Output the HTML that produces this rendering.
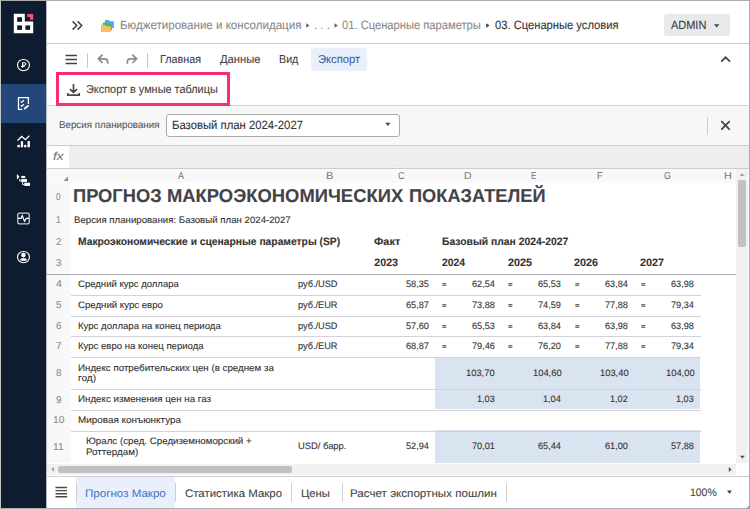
<!DOCTYPE html>
<html lang="ru">
<head>
<meta charset="utf-8">
<title>Сценарные условия</title>
<style>
html,body{margin:0;padding:0}
html{background:#fff}
body{width:750px;height:509px;position:relative;overflow:hidden;background:#9a9a9a;font-family:"Liberation Sans",sans-serif}
#frame{position:absolute;left:0;top:0;width:750px;height:509px;box-sizing:border-box;background:#fff;border:1px solid #ababab;border-left-color:#c4c4c4;border-bottom-color:#aaaaaa;border-radius:0 0 5px 0;overflow:hidden}
#app{position:absolute;left:-1px;top:-1px;width:750px;height:509px}
.a{position:absolute}
.t{position:absolute;white-space:pre;text-rendering:geometricPrecision;-webkit-text-stroke:0.1px;line-height:20px;height:20px;transform-origin:0 50%}
#side{left:1px;top:1px;width:45px;height:507px;background:#0e1c2f}
#side .act{left:0;top:83px;width:45px;height:39px;background:#24477b}
.hl{position:absolute;height:1px;background:#cbcbd3}
.vl{position:absolute;width:1px;background:#cfcfcf}
.cell{position:absolute;background:#dae3f0}
.gl{position:absolute;height:1px;background:#d2d2d8}
</style>
</head>
<body>
<div id="frame"><div id="app">

<!-- sidebar -->
<div id="side" class="a">
  <div class="act a"></div>
</div>
<div class="a" style="left:46px;top:1px;width:1px;height:507px;background:#b9b9c0"></div>
<svg class="a" style="left:0;top:0" width="47" height="509" viewBox="0 0 47 509" fill="none">
<!-- logo -->
<path d="M13.8 13.8H24.8V21.6H33.2V33.2H13.8Z" fill="#fff"/>
<rect x="17.2" y="17.2" width="4.8" height="4.6" fill="#0e1c2f"/>
<rect x="17.2" y="25.4" width="4.8" height="4.5" fill="#0e1c2f"/>
<rect x="25.4" y="25.4" width="4.7" height="4.5" fill="#0e1c2f"/>
<path d="M27.2 14H33.2V19.8H30.1V17.1H27.2Z" fill="#ff4a7d"/>
<!-- ruble -->
<ellipse cx="23.5" cy="65.1" rx="6" ry="5.6" stroke="#fff" stroke-width="1.15"/>
<path d="M22.55 67.8V62.7H24.6a1.3 1.3 0 0 1 0 2.6H22.55" stroke="#fff" stroke-width="1.05"/>
<rect x="20.9" y="66.1" width="3.8" height="0.95" fill="#fff"/>
<!-- doc (active) -->
<path d="M22.3 109.3H18.5V97.6H28.4V104" stroke="#fff" stroke-width="1.3"/>
<path d="M24.2 109L28.6 105.3" stroke="#fff" stroke-width="1.7"/>
<path d="M20.8 101.6L21.7 102.3L23.9 100.3M20.8 105.5L21.7 106.2L23.9 104.2" stroke="#fff" stroke-width="1.2"/>
<!-- chart -->
<rect x="17.4" y="144.9" width="2.4" height="2.4" fill="#fff"/>
<rect x="20.8" y="141.2" width="2.3" height="6.1" fill="#fff"/>
<rect x="24.1" y="144.9" width="2.3" height="2.4" fill="#fff"/>
<rect x="27.5" y="141" width="2.4" height="6.3" fill="#fff"/>
<path d="M17.5 140.4L21.8 136.4L25.4 139.7L29.3 135.7" stroke="#fff" stroke-width="1.3"/>
<!-- tree -->
<path d="M16.9 174.1L19.6 176.8L16.9 179.5Z" fill="#fff"/>
<rect x="21.3" y="175.9" width="3.9" height="2.2" fill="#fff"/>
<rect x="21.2" y="179.1" width="5.8" height="2.8" fill="#fff"/>
<rect x="24.3" y="182.7" width="5.7" height="3.2" fill="#fff"/>
<path d="M19.7 179V181H21.5M22.6 182V184.6H24.5" stroke="#fff" stroke-width="0.9"/>
<!-- monitor -->
<rect x="17.8" y="213.1" width="11.4" height="10.8" rx="1.4" stroke="#c9cdd3" stroke-width="1.3"/>
<path d="M18 218.4H21L22.2 215.6L24.5 221.3L26.3 218.4H29" stroke="#fff" stroke-width="1.2"/>
<!-- user -->
<ellipse cx="23.5" cy="257.1" rx="6" ry="5.6" stroke="#fff" stroke-width="1.15"/>
<circle cx="23.4" cy="255.1" r="2.3" fill="#fff"/>
<path d="M19.9 260.1C20.3 258.8 21.8 258.1 23.5 258.1S26.7 258.8 27.1 260.1C26 260.8 24.8 261 23.5 261S21 260.8 19.9 260.1Z" fill="#fff"/>
</svg>

<!-- header -->
<div class="hl" style="left:47px;top:43px;width:702px"></div>
<div class="a" style="left:664px;top:14px;width:66px;height:22px;border-radius:3px;background:#e8e9eb"></div>
<svg class="a" style="left:60px;top:10px" width="70" height="30" viewBox="60 10 70 30" fill="none">
<path d="M72.6 21.4L76.7 25.5L72.6 29.6M77.6 21.4L81.7 25.5L77.6 29.6" stroke="#444" stroke-width="1.55"/>
<path d="M104.9 19.9H108.8L110 21.2H113.9V27.9H104.9Z" fill="#5aa2f7"/>
<path d="M102.8 23.3A0.8 0.8 0 0 1 103.6 22.5H106.6L107.8 23.9H112V30.3H102.8Z" fill="#34c759"/>
<path d="M101 24.8H105L106.3 26.2H110.8V31.9H101Z" fill="#ffbb66"/>
</svg>
<svg class="a" style="left:300px;top:20px" width="430" height="12" viewBox="300 20 430 12">
<path d="M306.2 23.2L309.6 25.5L306.2 27.8Z" fill="#666"/>
<path d="M334.5 23.2L337.9 25.5L334.5 27.8Z" fill="#666"/>
<path d="M486.2 23.2L489.6 25.5L486.2 27.8Z" fill="#444"/>
<path d="M714 24.2H719.4L716.7 27.4Z" fill="#444"/>
</svg>

<!-- ribbon -->
<div class="a" style="left:311px;top:48px;width:56px;height:23px;border-radius:3px;background:#e9f0fb"></div>
<div class="vl" style="left:87px;top:53px;height:15px;background:#c8c8c8"></div>
<div class="vl" style="left:147px;top:53px;height:15px;background:#c8c8c8"></div>
<svg class="a" style="left:60px;top:50px" width="90" height="50" viewBox="60 50 90 50" fill="none">
<path d="M65.5 55.4H77M65.5 59.4H77M65.5 63.4H77" stroke="#444" stroke-width="1.5"/>
<path d="M102.6 54.7L98.4 58.8L102.6 63M98.6 58.8H104.4Q107.7 58.8 107.7 62V63.8" stroke="#8a8a8a" stroke-width="1.7"/>
<path d="M132.4 54.7L136.6 58.8L132.4 63M136.4 58.8H130.6Q127.3 58.8 127.3 62V63.8" stroke="#8a8a8a" stroke-width="1.7"/>
<path d="M73.5 84.1V92M69.9 89.2L73.5 92.4L77.1 89.2M67.8 93.1V95.2H79.2V93.1" stroke="#4a4a4f" stroke-width="1.7"/>
</svg>
<svg class="a" style="left:715px;top:50px" width="20" height="20" viewBox="715 50 20 20" fill="none">
<path d="M721.2 61.7L725.6 57.3L730 61.7" stroke="#444" stroke-width="1.7"/>
</svg>


<!-- parameters panel -->
<div class="a" style="left:47px;top:106px;width:702px;height:40px;background:#f7f7f7"></div>
<div class="hl" style="left:47px;top:105px;width:702px;background:#d2d2d8"></div>
<div class="hl" style="left:47px;top:145px;width:702px"></div>
<div class="a" style="left:166px;top:114px;width:234px;height:23px;box-sizing:border-box;border:1px solid #ababab;border-radius:3px;background:#fff"></div>
<div class="vl" style="left:707px;top:117px;height:18px;background:#cdcdcd"></div>

<svg class="a" style="left:715px;top:115px" width="20" height="20" viewBox="715 115 20 20" fill="none">
<path d="M721.3 121.2L729.7 129.6M729.7 121.2L721.3 129.6" stroke="#444" stroke-width="1.7"/>
</svg>
<svg class="a" style="left:384px;top:121px" width="8" height="7" viewBox="384 121 8 7"><path d="M385.3 122.8H390.5L387.9 126Z" fill="#444"/></svg>

<div class="a" style="left:56px;top:72px;width:174px;height:34px;box-sizing:border-box;border:3px solid #fa2e6b"></div>
<!-- formula bar -->
<div class="a" style="left:47px;top:146px;width:702px;height:22px;background:#eeeeee"></div>
<div class="a" style="left:47px;top:146px;width:22px;height:22px;background:#fff"></div>
<div class="a" style="left:394px;top:165px;width:1px;height:1px;background:#d6d6dc;box-shadow:3px 0 #d6d6dc,6px 0 #d6d6dc"></div>
<div class="hl" style="left:47px;top:168px;width:702px"></div>

<!-- sheet -->
<div class="a" style="left:47px;top:169px;width:689px;height:14px;background:#f9f9f9"></div>
<div class="a" style="left:47px;top:183px;width:24px;height:280px;background:#f8f8f8"></div>
<div class="cell" style="left:435px;top:358px;width:265px;height:31px"></div>
<div class="cell" style="left:435px;top:390px;width:265px;height:19px"></div>
<div class="cell" style="left:435px;top:430px;width:265px;height:33px"></div>
<div class="gl" style="left:71px;top:295px;width:630px"></div>
<div class="gl" style="left:71px;top:316px;width:630px"></div>
<div class="gl" style="left:71px;top:336px;width:630px"></div>
<div class="gl" style="left:71px;top:357px;width:630px"></div>
<div class="gl" style="left:71px;top:389px;width:630px"></div>
<div class="gl" style="left:71px;top:410px;width:630px"></div>
<div class="gl" style="left:71px;top:431px;width:630px"></div>
<div class="a" style="left:47px;top:274px;width:689px;height:1px;background:#ababb0"></div>
<svg class="a" style="left:63px;top:176px" width="6" height="6" viewBox="0 0 6 6"><path d="M5 0.5V5H0.5Z" fill="#8c8c8c"/></svg>

<!-- scrollbars -->
<div class="a" style="left:736px;top:169px;width:12px;height:294px;background:#f1f1f1"></div>
<div class="a" style="left:738px;top:180px;width:8px;height:67px;border-radius:2px;background:#c1c1c1"></div>
<div class="a" style="left:47px;top:464px;width:689px;height:11px;background:#f1f1f1"></div>
<div class="a" style="left:58px;top:465.5px;width:234px;height:7.2px;border-radius:2px;background:#c1c1c1"></div>
<svg class="a" style="left:47px;top:169px" width="702" height="307" viewBox="47 169 702 307">
<path d="M739.6 176H744.6L742.1 173.2Z" fill="#a0a0a0"/>
<path d="M739.9 455.8H744.9L742.4 458.6Z" fill="#505050"/>
<path d="M54 466.8V471.8L51.2 469.3Z" fill="#a0a0a0"/>
<path d="M728.8 466.9V471.9L731.6 469.4Z" fill="#505050"/>
</svg>

<!-- bottom tabs -->
<div class="hl" style="left:47px;top:476px;width:702px"></div>
<div class="a" style="left:76px;top:477px;width:99px;height:31px;background:#e9f0fb"></div>
<div class="vl" style="left:76px;top:483px;height:19px"></div>
<div class="vl" style="left:175px;top:483px;height:19px"></div>
<div class="vl" style="left:291px;top:483px;height:19px"></div>
<div class="vl" style="left:342px;top:483px;height:19px"></div>
<div class="vl" style="left:506px;top:483px;height:19px"></div>
<svg class="a" style="left:54px;top:484px" width="16" height="16" viewBox="54 484 16 16" fill="none">
<path d="M55.5 487.5H67.1M55.5 490.6H67.1M55.5 493.7H67.1M55.5 496.8H67.1" stroke="#4a4a4a" stroke-width="1.4"/>
</svg>
<svg class="a" style="left:726px;top:489px" width="8" height="7" viewBox="726 489 8 7"><path d="M727.1 490.6H731.9L729.5 493.9Z" fill="#444"/></svg>

<span class="t" style="left:119.74px;top:15.30px;font-size:12px;font-weight:400;font-style:normal;color:#8a8a8a;transform:scaleX(0.9626)">Бюджетирование и консолидация</span>
<span class="t" style="left:314.05px;top:15.30px;font-size:12px;font-weight:400;font-style:normal;color:#8a8a8a;transform:scaleX(0.9533)">. . .</span>
<span class="t" style="left:342.00px;top:15.30px;font-size:12px;font-weight:400;font-style:normal;color:#8a8a8a;transform:scaleX(0.9309)">01. Сценарные параметры</span>
<span class="t" style="left:495.00px;top:15.30px;font-size:12px;font-weight:400;font-style:normal;color:#333;transform:scaleX(0.9318)">03. Сценарные условия</span>
<span class="t" style="left:671.30px;top:15.30px;font-size:12px;font-weight:400;font-style:normal;color:#3c3c3c;transform:scaleX(0.9132)">ADMIN</span>
<span class="t" style="left:159.76px;top:50.30px;font-size:11.5px;font-weight:400;font-style:normal;color:#444;transform:scaleX(0.9357)">Главная</span>
<span class="t" style="left:220.20px;top:50.30px;font-size:11.5px;font-weight:400;font-style:normal;color:#444;transform:scaleX(0.9756)">Данные</span>
<span class="t" style="left:279.47px;top:50.30px;font-size:11.5px;font-weight:400;font-style:normal;color:#444;transform:scaleX(0.9300)">Вид</span>
<span class="t" style="left:317.82px;top:50.30px;font-size:11.5px;font-weight:400;font-style:normal;color:#3c5fa6;transform:scaleX(0.9762)">Экспорт</span>
<span class="t" style="left:86.25px;top:80.30px;font-size:11.5px;font-weight:400;font-style:normal;color:#444;transform:scaleX(0.9478)">Экспорт в умные таблицы</span>
<span class="t" style="left:59.02px;top:116.00px;font-size:10px;font-weight:400;font-style:normal;color:#555;transform:scaleX(0.9765)">Версия планирования</span>
<span class="t" style="left:171.76px;top:114.70px;font-size:12px;font-weight:400;font-style:normal;color:#333;transform:scaleX(0.9420)">Базовый план 2024-2027</span>
<span class="t" style="left:52.90px;top:147.00px;font-size:11.5px;font-weight:400;font-style:italic;color:#777;transform:scaleX(1.1889)">fx</span>
<span class="t" style="left:178.00px;top:166.90px;font-size:10px;font-weight:400;font-style:normal;color:#7a7a7a;transform:scaleX(0.9000)">A</span>
<span class="t" style="left:325.58px;top:166.90px;font-size:10px;font-weight:400;font-style:normal;color:#7a7a7a;transform:scaleX(1.1200)">B</span>
<span class="t" style="left:398.10px;top:166.90px;font-size:10px;font-weight:400;font-style:normal;color:#7a7a7a;transform:scaleX(0.9000)">C</span>
<span class="t" style="left:463.97px;top:166.90px;font-size:10px;font-weight:400;font-style:normal;color:#7a7a7a;transform:scaleX(1.0333)">D</span>
<span class="t" style="left:531.40px;top:166.90px;font-size:10px;font-weight:400;font-style:normal;color:#7a7a7a;transform:scaleX(0.8000)">E</span>
<span class="t" style="left:597.48px;top:166.90px;font-size:10px;font-weight:400;font-style:normal;color:#7a7a7a;transform:scaleX(0.9200)">F</span>
<span class="t" style="left:664.30px;top:166.90px;font-size:10px;font-weight:400;font-style:normal;color:#7a7a7a;transform:scaleX(0.8857)">G</span>
<span class="t" style="left:724.42px;top:166.90px;font-size:10px;font-weight:400;font-style:normal;color:#7a7a7a;transform:scaleX(1.0833)">H</span>
<span class="t" style="left:73.02px;top:186.40px;font-size:18.67px;font-weight:700;font-style:normal;color:#434347;transform:scaleX(0.9809)">ПРОГНОЗ</span>
<span class="t" style="left:167.31px;top:186.40px;font-size:18.67px;font-weight:700;font-style:normal;color:#434347;transform:scaleX(0.9861)">МАКРОЭКОНОМИЧЕСКИХ</span>
<span class="t" style="left:409.22px;top:186.40px;font-size:18.67px;font-weight:700;font-style:normal;color:#434347;transform:scaleX(0.9768)">ПОКАЗАТЕЛЕЙ</span>
<span class="t" style="left:73.70px;top:210.40px;font-size:9.33px;font-weight:400;font-style:normal;color:#333;transform:scaleX(1.0359)">Версия планирования: Базовый план 2024-2027</span>
<span class="t" style="left:78.30px;top:232.00px;font-size:10.67px;font-weight:700;font-style:normal;color:#333;transform:scaleX(0.9657)">Макроэкономические и сценарные параметры (SP)</span>
<span class="t" style="left:374.30px;top:232.00px;font-size:10.67px;font-weight:700;font-style:normal;color:#333;transform:scaleX(1.0280)">Факт</span>
<span class="t" style="left:442.00px;top:232.00px;font-size:10.67px;font-weight:700;font-style:normal;color:#333;transform:scaleX(0.9715)">Базовый план 2024-2027</span>
<span class="t" style="left:374.30px;top:253.00px;font-size:10.67px;font-weight:700;font-style:normal;color:#333;transform:scaleX(1.0000)">2023</span>
<span class="t" style="left:442.00px;top:253.00px;font-size:10.67px;font-weight:700;font-style:normal;color:#333;transform:scaleX(0.9708)">2024</span>
<span class="t" style="left:507.70px;top:253.00px;font-size:10.67px;font-weight:700;font-style:normal;color:#333;transform:scaleX(1.0125)">2025</span>
<span class="t" style="left:574.00px;top:253.00px;font-size:10.67px;font-weight:700;font-style:normal;color:#333;transform:scaleX(1.0125)">2026</span>
<span class="t" style="left:640.30px;top:253.00px;font-size:10.67px;font-weight:700;font-style:normal;color:#333;transform:scaleX(1.0167)">2027</span>
<span class="t" style="left:56.30px;top:188.00px;font-size:10px;font-weight:400;font-style:normal;color:#8a8a8a;transform:scaleX(0.8167)">0</span>
<span class="t" style="left:56.05px;top:211.00px;font-size:10px;font-weight:400;font-style:normal;color:#8a8a8a;transform:scaleX(0.8500)">1</span>
<span class="t" style="left:56.30px;top:233.00px;font-size:10px;font-weight:400;font-style:normal;color:#8a8a8a;transform:scaleX(0.9800)">2</span>
<span class="t" style="left:56.30px;top:254.00px;font-size:10px;font-weight:400;font-style:normal;color:#8a8a8a;transform:scaleX(0.9800)">3</span>
<span class="t" style="left:56.00px;top:275.20px;font-size:10px;font-weight:400;font-style:normal;color:#8a8a8a;transform:scaleX(1.0600)">4</span>
<span class="t" style="left:56.30px;top:296.00px;font-size:10px;font-weight:400;font-style:normal;color:#8a8a8a;transform:scaleX(0.9800)">5</span>
<span class="t" style="left:56.30px;top:317.00px;font-size:10px;font-weight:400;font-style:normal;color:#8a8a8a;transform:scaleX(0.9800)">6</span>
<span class="t" style="left:56.30px;top:337.40px;font-size:10px;font-weight:400;font-style:normal;color:#8a8a8a;transform:scaleX(0.9800)">7</span>
<span class="t" style="left:56.30px;top:364.20px;font-size:10px;font-weight:400;font-style:normal;color:#8a8a8a;transform:scaleX(0.9800)">8</span>
<span class="t" style="left:56.30px;top:391.00px;font-size:10px;font-weight:400;font-style:normal;color:#8a8a8a;transform:scaleX(0.9800)">9</span>
<span class="t" style="left:52.87px;top:411.00px;font-size:10px;font-weight:400;font-style:normal;color:#8a8a8a;transform:scaleX(1.0300)">10</span>
<span class="t" style="left:53.08px;top:438.00px;font-size:10px;font-weight:400;font-style:normal;color:#8a8a8a;transform:scaleX(1.0222)">11</span>
<span class="t" style="left:78.00px;top:274.30px;font-size:9.33px;font-weight:400;font-style:normal;color:#333;transform:scaleX(1.0232)">Средний курс доллара</span>
<span class="t" style="left:298.30px;top:274.30px;font-size:9.33px;font-weight:400;font-style:normal;color:#333;transform:scaleX(0.9850)">руб./USD</span>
<span class="t" style="left:405.70px;top:274.30px;font-size:9.33px;font-weight:400;font-style:normal;color:#333;transform:scaleX(0.9826)">58,35</span>
<span class="t" style="left:471.90px;top:274.30px;font-size:9.33px;font-weight:400;font-style:normal;color:#333;transform:scaleX(0.9826)">62,54</span>
<span class="t" style="left:441.90px;top:276.40px;font-size:7px;font-weight:700;font-style:normal;color:#555;transform:scaleX(1.1000)">=</span>
<span class="t" style="left:538.40px;top:274.30px;font-size:9.33px;font-weight:400;font-style:normal;color:#333;transform:scaleX(0.9826)">65,53</span>
<span class="t" style="left:508.30px;top:276.40px;font-size:7px;font-weight:700;font-style:normal;color:#555;transform:scaleX(1.1000)">=</span>
<span class="t" style="left:605.00px;top:274.30px;font-size:9.33px;font-weight:400;font-style:normal;color:#333;transform:scaleX(0.9826)">63,84</span>
<span class="t" style="left:574.80px;top:276.40px;font-size:7px;font-weight:700;font-style:normal;color:#555;transform:scaleX(1.1000)">=</span>
<span class="t" style="left:671.20px;top:274.30px;font-size:9.33px;font-weight:400;font-style:normal;color:#333;transform:scaleX(0.9826)">63,98</span>
<span class="t" style="left:640.80px;top:276.40px;font-size:7px;font-weight:700;font-style:normal;color:#555;transform:scaleX(1.1000)">=</span>
<span class="t" style="left:78.00px;top:295.00px;font-size:9.33px;font-weight:400;font-style:normal;color:#333;transform:scaleX(1.0329)">Средний курс евро</span>
<span class="t" style="left:298.30px;top:295.00px;font-size:9.33px;font-weight:400;font-style:normal;color:#333;transform:scaleX(0.9850)">руб./EUR</span>
<span class="t" style="left:405.70px;top:295.00px;font-size:9.33px;font-weight:400;font-style:normal;color:#333;transform:scaleX(0.9826)">65,87</span>
<span class="t" style="left:471.90px;top:295.00px;font-size:9.33px;font-weight:400;font-style:normal;color:#333;transform:scaleX(0.9826)">73,88</span>
<span class="t" style="left:441.90px;top:297.10px;font-size:7px;font-weight:700;font-style:normal;color:#555;transform:scaleX(1.1000)">=</span>
<span class="t" style="left:538.40px;top:295.00px;font-size:9.33px;font-weight:400;font-style:normal;color:#333;transform:scaleX(0.9826)">74,59</span>
<span class="t" style="left:508.30px;top:297.10px;font-size:7px;font-weight:700;font-style:normal;color:#555;transform:scaleX(1.1000)">=</span>
<span class="t" style="left:605.00px;top:295.00px;font-size:9.33px;font-weight:400;font-style:normal;color:#333;transform:scaleX(0.9826)">77,88</span>
<span class="t" style="left:574.80px;top:297.10px;font-size:7px;font-weight:700;font-style:normal;color:#555;transform:scaleX(1.1000)">=</span>
<span class="t" style="left:671.20px;top:295.00px;font-size:9.33px;font-weight:400;font-style:normal;color:#333;transform:scaleX(0.9826)">79,34</span>
<span class="t" style="left:640.80px;top:297.10px;font-size:7px;font-weight:700;font-style:normal;color:#555;transform:scaleX(1.1000)">=</span>
<span class="t" style="left:78.00px;top:315.60px;font-size:9.33px;font-weight:400;font-style:normal;color:#333;transform:scaleX(1.0288)">Курс доллара на конец периода</span>
<span class="t" style="left:298.30px;top:315.60px;font-size:9.33px;font-weight:400;font-style:normal;color:#333;transform:scaleX(0.9850)">руб./USD</span>
<span class="t" style="left:405.70px;top:315.60px;font-size:9.33px;font-weight:400;font-style:normal;color:#333;transform:scaleX(0.9826)">57,60</span>
<span class="t" style="left:471.90px;top:315.60px;font-size:9.33px;font-weight:400;font-style:normal;color:#333;transform:scaleX(0.9826)">65,53</span>
<span class="t" style="left:441.90px;top:317.70px;font-size:7px;font-weight:700;font-style:normal;color:#555;transform:scaleX(1.1000)">=</span>
<span class="t" style="left:538.40px;top:315.60px;font-size:9.33px;font-weight:400;font-style:normal;color:#333;transform:scaleX(0.9826)">63,84</span>
<span class="t" style="left:508.30px;top:317.70px;font-size:7px;font-weight:700;font-style:normal;color:#555;transform:scaleX(1.1000)">=</span>
<span class="t" style="left:605.00px;top:315.60px;font-size:9.33px;font-weight:400;font-style:normal;color:#333;transform:scaleX(0.9826)">63,98</span>
<span class="t" style="left:574.80px;top:317.70px;font-size:7px;font-weight:700;font-style:normal;color:#555;transform:scaleX(1.1000)">=</span>
<span class="t" style="left:671.20px;top:315.60px;font-size:9.33px;font-weight:400;font-style:normal;color:#333;transform:scaleX(0.9826)">63,98</span>
<span class="t" style="left:640.80px;top:317.70px;font-size:7px;font-weight:700;font-style:normal;color:#555;transform:scaleX(1.1000)">=</span>
<span class="t" style="left:78.00px;top:336.20px;font-size:9.33px;font-weight:400;font-style:normal;color:#333;transform:scaleX(1.0268)">Курс евро на конец периода</span>
<span class="t" style="left:298.30px;top:336.20px;font-size:9.33px;font-weight:400;font-style:normal;color:#333;transform:scaleX(0.9850)">руб./EUR</span>
<span class="t" style="left:405.70px;top:336.20px;font-size:9.33px;font-weight:400;font-style:normal;color:#333;transform:scaleX(0.9826)">68,87</span>
<span class="t" style="left:471.90px;top:336.20px;font-size:9.33px;font-weight:400;font-style:normal;color:#333;transform:scaleX(0.9826)">79,46</span>
<span class="t" style="left:441.90px;top:338.30px;font-size:7px;font-weight:700;font-style:normal;color:#555;transform:scaleX(1.1000)">=</span>
<span class="t" style="left:538.40px;top:336.20px;font-size:9.33px;font-weight:400;font-style:normal;color:#333;transform:scaleX(0.9826)">76,20</span>
<span class="t" style="left:508.30px;top:338.30px;font-size:7px;font-weight:700;font-style:normal;color:#555;transform:scaleX(1.1000)">=</span>
<span class="t" style="left:605.00px;top:336.20px;font-size:9.33px;font-weight:400;font-style:normal;color:#333;transform:scaleX(0.9826)">77,88</span>
<span class="t" style="left:574.80px;top:338.30px;font-size:7px;font-weight:700;font-style:normal;color:#555;transform:scaleX(1.1000)">=</span>
<span class="t" style="left:671.20px;top:336.20px;font-size:9.33px;font-weight:400;font-style:normal;color:#333;transform:scaleX(0.9826)">79,34</span>
<span class="t" style="left:640.80px;top:338.30px;font-size:7px;font-weight:700;font-style:normal;color:#555;transform:scaleX(1.1000)">=</span>
<span class="t" style="left:78.00px;top:358.20px;font-size:9.33px;font-weight:400;font-style:normal;color:#333;transform:scaleX(1.0441)">Индекс потребительских цен (в среднем за</span>
<span class="t" style="left:78.00px;top:367.70px;font-size:9.33px;font-weight:400;font-style:normal;color:#333;transform:scaleX(1.0812)">год)</span>
<span class="t" style="left:466.40px;top:363.30px;font-size:9.33px;font-weight:400;font-style:normal;color:#333;transform:scaleX(1.0036)">103,70</span>
<span class="t" style="left:532.90px;top:363.30px;font-size:9.33px;font-weight:400;font-style:normal;color:#333;transform:scaleX(1.0036)">104,60</span>
<span class="t" style="left:599.50px;top:363.30px;font-size:9.33px;font-weight:400;font-style:normal;color:#333;transform:scaleX(1.0036)">103,40</span>
<span class="t" style="left:665.70px;top:363.30px;font-size:9.33px;font-weight:400;font-style:normal;color:#333;transform:scaleX(1.0036)">104,00</span>
<span class="t" style="left:78.00px;top:388.50px;font-size:9.33px;font-weight:400;font-style:normal;color:#333;transform:scaleX(1.0472)">Индекс изменения цен на газ</span>
<span class="t" style="left:476.90px;top:389.00px;font-size:9.33px;font-weight:400;font-style:normal;color:#333;transform:scaleX(0.9778)">1,03</span>
<span class="t" style="left:543.40px;top:389.00px;font-size:9.33px;font-weight:400;font-style:normal;color:#333;transform:scaleX(0.9778)">1,04</span>
<span class="t" style="left:610.00px;top:389.00px;font-size:9.33px;font-weight:400;font-style:normal;color:#333;transform:scaleX(0.9778)">1,02</span>
<span class="t" style="left:676.20px;top:389.00px;font-size:9.33px;font-weight:400;font-style:normal;color:#333;transform:scaleX(0.9778)">1,03</span>
<span class="t" style="left:78.00px;top:410.20px;font-size:9.33px;font-weight:400;font-style:normal;color:#333;transform:scaleX(1.0619)">Мировая конъюнктура</span>
<span class="t" style="left:86.00px;top:431.00px;font-size:9.33px;font-weight:400;font-style:normal;color:#333;transform:scaleX(1.0437)">Юралс (сред. Средиземноморский +</span>
<span class="t" style="left:86.00px;top:441.70px;font-size:9.33px;font-weight:400;font-style:normal;color:#333;transform:scaleX(1.0531)">Роттердам)</span>
<span class="t" style="left:298.30px;top:436.00px;font-size:9.33px;font-weight:400;font-style:normal;color:#333;transform:scaleX(1.0042)">USD/ барр.</span>
<span class="t" style="left:405.70px;top:436.00px;font-size:9.33px;font-weight:400;font-style:normal;color:#333;transform:scaleX(0.9826)">52,94</span>
<span class="t" style="left:471.90px;top:436.00px;font-size:9.33px;font-weight:400;font-style:normal;color:#333;transform:scaleX(0.9826)">70,01</span>
<span class="t" style="left:538.40px;top:436.00px;font-size:9.33px;font-weight:400;font-style:normal;color:#333;transform:scaleX(0.9826)">65,44</span>
<span class="t" style="left:605.00px;top:436.00px;font-size:9.33px;font-weight:400;font-style:normal;color:#333;transform:scaleX(0.9826)">61,00</span>
<span class="t" style="left:671.20px;top:436.00px;font-size:9.33px;font-weight:400;font-style:normal;color:#333;transform:scaleX(0.9826)">57,88</span>
<span class="t" style="left:84.95px;top:483.50px;font-size:11px;font-weight:400;font-style:normal;color:#4a7ac7;transform:scaleX(1.0526)">Прогноз Макро</span>
<span class="t" style="left:185.30px;top:483.50px;font-size:11px;font-weight:400;font-style:normal;color:#444;transform:scaleX(1.0398)">Статистика Макро</span>
<span class="t" style="left:300.68px;top:483.50px;font-size:11px;font-weight:400;font-style:normal;color:#444;transform:scaleX(1.0222)">Цены</span>
<span class="t" style="left:349.94px;top:483.50px;font-size:11px;font-weight:400;font-style:normal;color:#444;transform:scaleX(1.0558)">Расчет экспортных пошлин</span>
<span class="t" style="left:690.35px;top:482.70px;font-size:11px;font-weight:400;font-style:normal;color:#444;transform:scaleX(0.9481)">100%</span>
</div></div>
</body>
</html>
